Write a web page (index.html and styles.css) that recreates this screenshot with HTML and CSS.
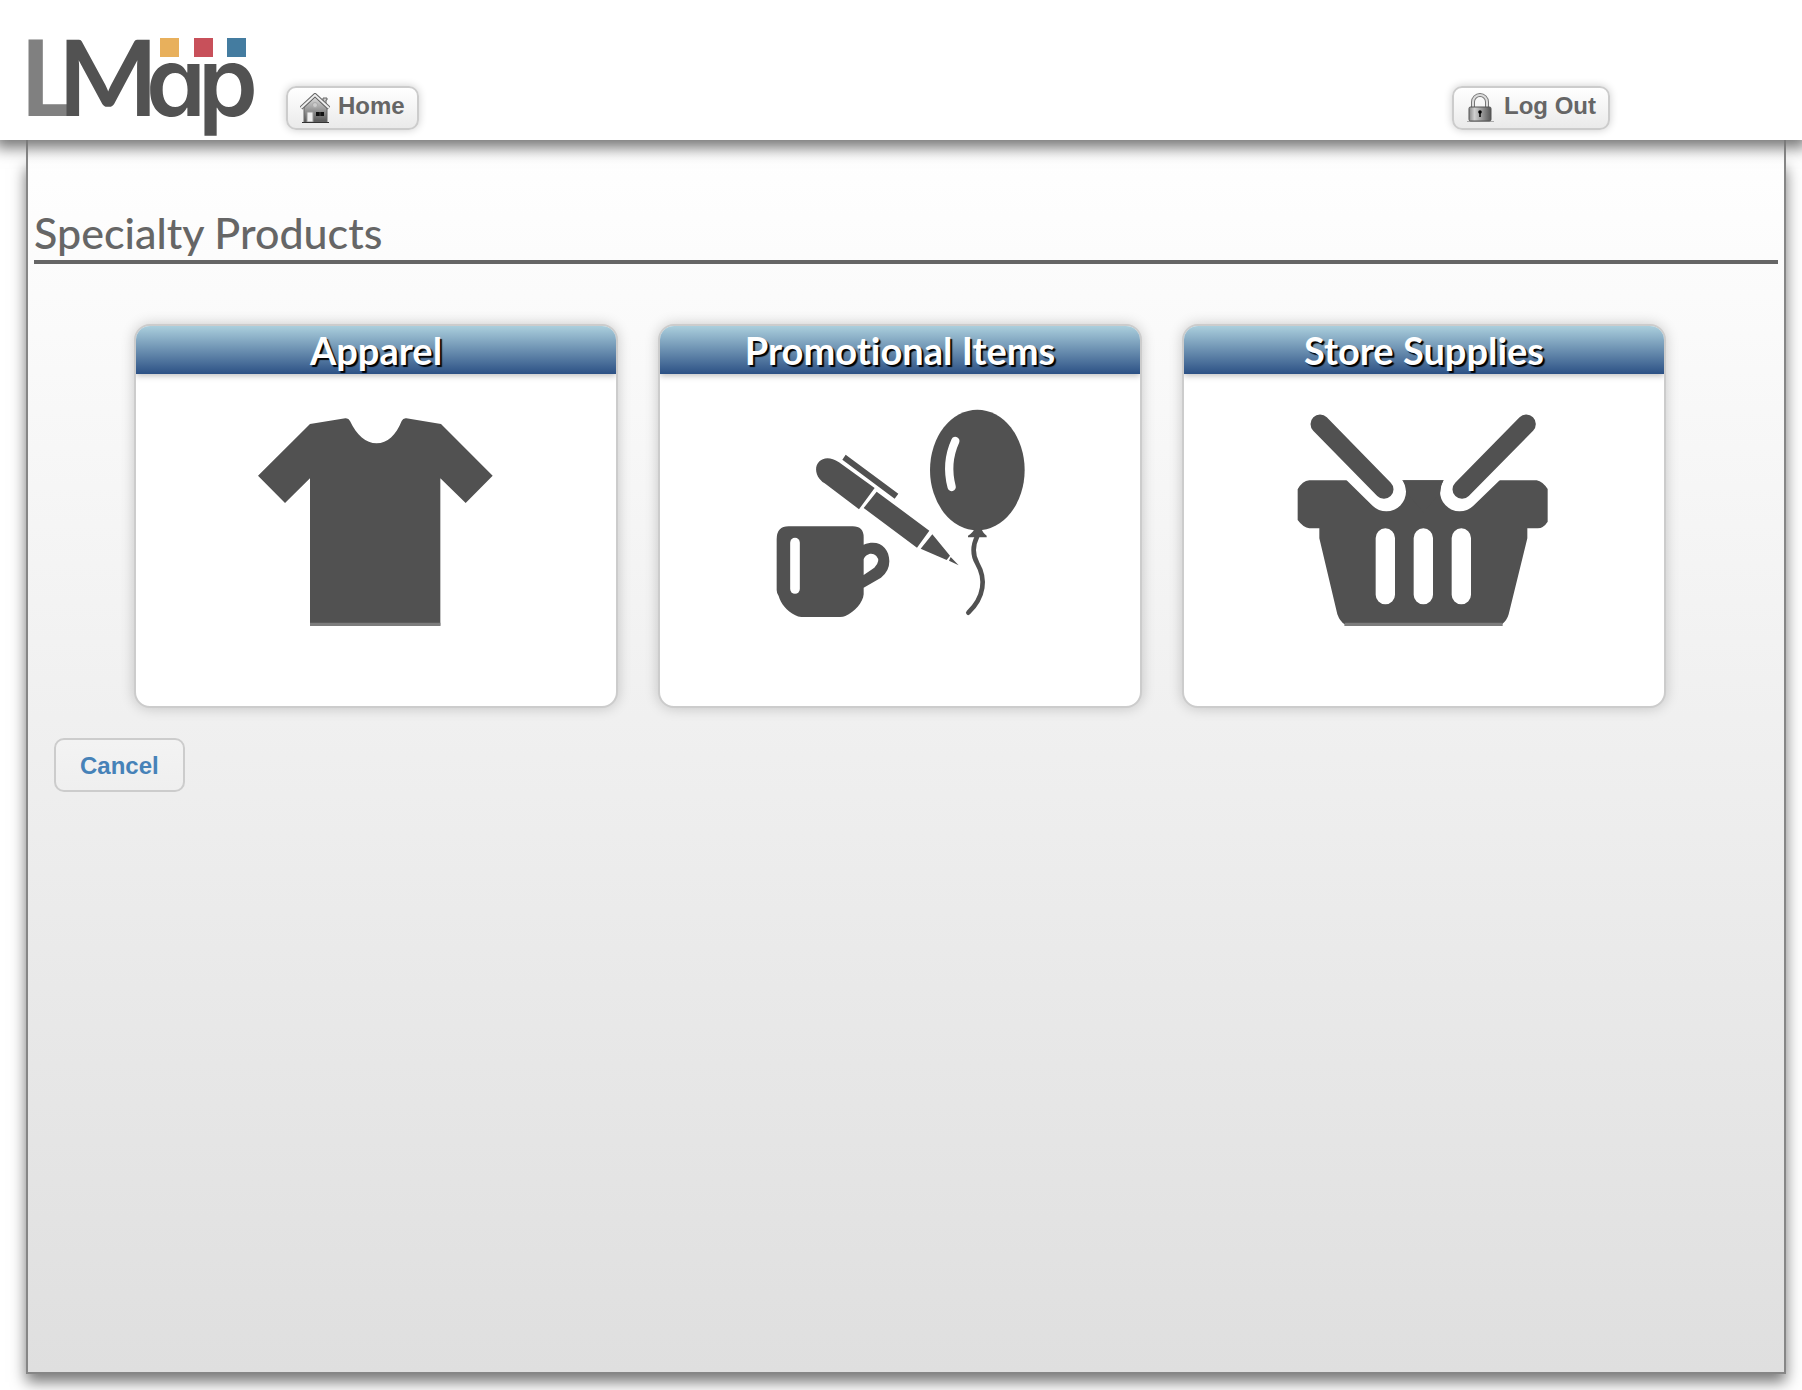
FILE: index.html
```html
<!DOCTYPE html>
<html lang="en">
<head>
<meta charset="utf-8">
<title>LMap - Specialty Products</title>
<meta name="viewport" content="width=device-width, initial-scale=1">
<link rel="stylesheet" href="styles.css">
</head>
<body>
<header class="topbar">
  <svg class="logo" viewBox="28 36 230 104" role="img" aria-label="LMap">
    <text y="116"><tspan class="logo-l" x="20">L</tspan><tspan class="logo-m" x="58">M</tspan><tspan class="logo-ap" x="146">a</tspan><tspan class="logo-ap" x="198">p</tspan></text>
    <rect x="160" y="38" width="19" height="19" fill="#e8b05c"/>
    <rect x="194" y="38" width="19" height="19" fill="#c8505a"/>
    <rect x="227" y="38" width="19" height="19" fill="#447ca0"/>
  </svg>
  <button class="button" type="button">
    <svg class="button-icon" viewBox="0 0 30 30" aria-hidden="true">
      <defs>
        <linearGradient id="wall" x1="0" y1="0" x2="0" y2="1"><stop offset="0" stop-color="#ddd"/><stop offset="1" stop-color="#555"/></linearGradient>
      </defs>
      <path d="M23 5h4v2h-1v6l-3-3z" fill="#ccc" stroke="#666"/>
      <path d="M4 14 15 4l12 11v14H4z" fill="url(#wall)" stroke="#666"/>
      <path d="M1 15 15 2l14 13" fill="none" stroke="#666" stroke-width="4"/>
      <path d="M1 15 15 2l14 13" fill="none" stroke="#eee" stroke-width="2"/>
      <circle cx="15" cy="12" r="2.5" fill="#ccc" stroke="#aaa"/>
      <path d="M7 19h6v10H7z" fill="#eee" stroke="#999"/>
      <path d="M16 19h8v4h-8z" fill="#111"/>
      <path d="M20 19v4" stroke="#444"/>
      <path d="M2 29.500h27" stroke="#333"/>
    </svg>
    Home
  </button>
  <button class="button logout" type="button">
    <svg class="button-icon" viewBox="0 0 30 30" aria-hidden="true">
      <defs>
        <linearGradient id="body"><stop offset="0" stop-color="#888"/><stop offset=".25" stop-color="#d0d0d0"/><stop offset="1" stop-color="#555"/></linearGradient>
      </defs>
      <path d="M1 28.500h27" stroke="#aaa"/>
      <path d="M7 16V9a7 7 0 0 1 14 0v7" fill="none" stroke="#777" stroke-width="4"/>
      <path d="M7 16V9a7 7 0 0 1 14 0v7" fill="none" stroke="#ddd" stroke-width="2"/>
      <rect x="3" y="14" width="22" height="14" rx="1.500" fill="url(#body)" stroke="#555"/>
      <circle cx="14" cy="19" r="1.800" fill="#000"/>
      <path d="M14 19v5" stroke="#000" stroke-width="1.500"/>
    </svg>
    Log Out
  </button>
</header>

<main class="panel">
  <h1 class="page-title">Specialty Products</h1>
  <div class="cards">
    <a class="card" href="#apparel">
      <h2 class="card-title">Apparel</h2>
      <svg class="card-art" viewBox="378 288 780 660" aria-hidden="true">
        <path d="M414 497 570 342 676 325q10-1 14 8c20 42 48 67 80 67s58-25 75-67q4-9 14-8l104 17 155 155-81 82-76-74v442H570V505l-75 74z"/>
        <path class="hem" d="M570 938h391v10H570z"/>
      </svg>
    </a>
    <a class="card" href="#promotional">
      <h2 class="card-title">Promotional Items</h2>
      <svg class="card-art" viewBox="360 288 780 660" aria-hidden="true">
        <ellipse cx="982" cy="480" rx="142" ry="181"/>
        <path d="M974 655h20q3 13 16 22v5h-56v-5q14-7 20-22z"/>
        <path class="line" stroke-width="14" d="M982 678c-14 28-15 57 0 83 26 45 22 100-27 147"/>
        <path class="line light" stroke-width="25" d="M916 393c-20 44-23 93-11 138"/>
        <path d="M674 534 567 457c-51-35-88 12-58 50q8 10 15 13l103 78zM680 545 838 662 801 713 641 594zM847 673 900 737 890 750 812 716zM902 741l24 25-29-14zM587 434 745 551 734 566 577 449z"/>
        <path fill-rule="evenodd" d="M416 649H608q33 0 33 33v22c44-18 77 8 77 50q0 30-25 49l-52 30v20C639 878 614 906 586 918Q580 921 570 921H454Q444 921 436 916C410 903 392 880 386 858Q380 850 380 840V688q0-39 36-39zM641 748v47l32-22q20-20 6-35c-14-13-32-5-38 10z"/>
        <path class="line light" stroke-width="29" d="M435 698v139"/>
      </svg>
    </a>
    <a class="card" href="#supplies">
      <h2 class="card-title">Store Supplies</h2>
      <svg class="card-art" viewBox="372 288 780 660" aria-hidden="true">
        <path d="M418 511h682q18 4 33 26v98q-12 19-30 20h-31v30l-56 228q-5 18-20 30v5H524v-5q-14-8-22-30L448 685v-30h-30q-18-2-35-25v-92q14-25 35-27z"/>
        <path class="line light" stroke-width="118" d="M440 340 649 545M1080 340 869 545"/>
        <path d="M700 511h120q-9 18-9 36l-50 60-53-60q1-18-8-36z"/>
        <path class="line" stroke-width="57" d="M450 342 642 538M1069 342 876 538"/>
        <path class="line light" stroke-width="58" d="M646 684v170M760 684v170M874 684v170"/>
        <path class="hem" d="M524 938h474v10H524z"/>
      </svg>
    </a>
  </div>
  <button class="button cancel" type="button">Cancel</button>
</main>
</body>
</html>
```

FILE: styles.css
```css
* { box-sizing: border-box; }

body {
  margin: 0;
  min-height: 100vh;
  display: flex;
  flex-direction: column;
  background: #fff;
  color: #666;
  font-family: "Liberation Sans", Arial, sans-serif;
}

.topbar {
  position: relative;
  z-index: 1;
  height: 140px;
  padding: 0 192px 0 28px;
  display: flex;
  align-items: flex-end;
  gap: 28px;
  background: #fff;
  box-shadow: 0 3px 14px 5px #777;
}

.logo { width: 230px; height: 104px; flex: none; overflow: visible; }
.logo-l { font: 700 106px Lato, sans-serif; fill: #808080; }
.logo-m { font: 700 106px Lato, sans-serif; fill: #525252; }
.logo-ap { font: 600 96px Inter, sans-serif; font-feature-settings: "cv11"; fill: #525252; }

.button {
  display: flex;
  align-items: center;
  gap: 8px;
  height: 44px;
  margin: 0 0 10px;
  padding: 0 12px 4px;
  border: 2px solid #ccc;
  border-radius: 10px;
  background: linear-gradient(#fff, #eaeaea);
  box-shadow: 0 0 8px rgba(0, 0, 0, .2);
  color: #666;
  font: bold 24px/28px "Liberation Sans", Arial, sans-serif;
  white-space: nowrap;
  cursor: pointer;
}
.button-icon { width: 30px; height: 30px; margin-top: 4px; flex: none; }
.logout { margin-left: auto; }

.panel {
  position: relative;
  flex: 1;
  margin: 0 16px 16px 26px;
  padding: 66px 6px 40px;
  border: 2px solid #868686;
  border-top: 0;
  background: linear-gradient(#fff, #dfdfdf);
}
/* The side shadow starts below the header's own shadow. */
.panel::before {
  content: "";
  position: absolute;
  z-index: -1;
  inset: 20px -2px -2px;
  box-shadow: 0 8px 14px #777;
}

.page-title {
  margin: 0;
  height: 58px;
  border-bottom: 4px solid #666;
  font: 500 43px/54px Lato, sans-serif;
}

.cards {
  display: grid;
  grid-template-columns: repeat(3, 1fr);
  gap: 40px;
  padding: 60px 112px 0 100px;
}

.card {
  height: 384px;
  display: flex;
  flex-direction: column;
  align-items: center;
  gap: 32px;
  overflow: hidden;
  border: 2px solid #ccc;
  border-radius: 16px;
  background: #fff;
  box-shadow: 0 0 14px rgba(0, 0, 0, .2);
  text-decoration: none;
}
.card-title {
  width: 100%;
  margin: 0;
  background: linear-gradient(#abcfdd, #2c5185);
  box-shadow: 0 2px 6px rgba(0, 0, 0, .25);
  color: #fff;
  font: 700 38px/48px Lato, sans-serif;
  font-variant-ligatures: none;
  text-align: center;
  text-shadow: 2px 2px 1px #000;
}
.card-art { width: 260px; height: 220px; fill: #515151; }
.line { fill: none; stroke: #515151; stroke-linecap: round; }
.light { stroke: #fff; }
.hem { fill: #7c7c7c; }

.cancel {
  height: 54px;
  margin: 30px 0 0 20px;
  padding: 2px 24px 0;
  background: linear-gradient(#f3f3f3, #efefef);
  box-shadow: none;
  color: #4682b8;
}
```
